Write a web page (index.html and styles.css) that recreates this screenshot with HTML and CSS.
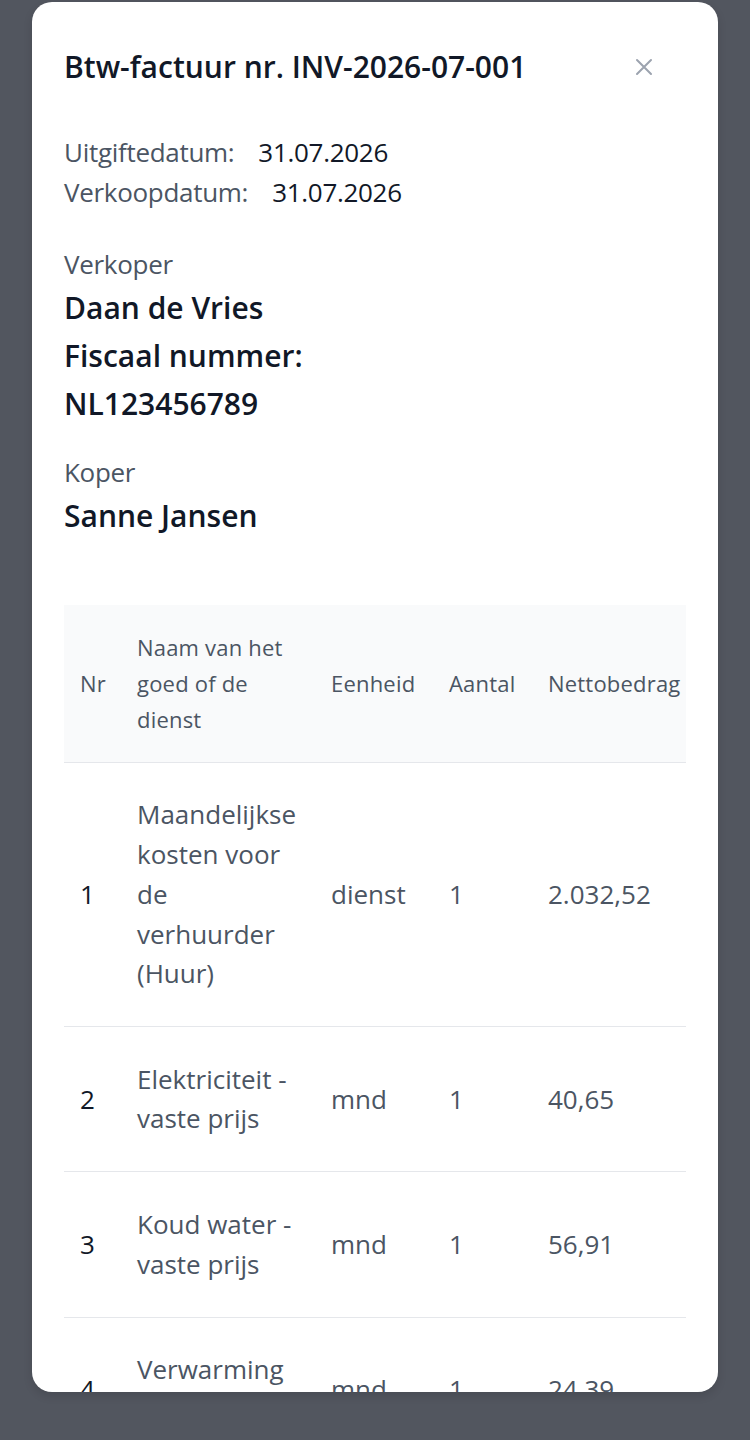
FILE: index.html
```html
<!DOCTYPE HTML>
<html>
	<head>
		<meta http-equiv="Content-Type" content="text/html; charset=UTF-8" />
		<title>Btw-factuur</title>
		<link rel="stylesheet" href="styles.css">
	</head>
	<body>
		<div class="modal">
			<div class="modal_head">
				<h1 class="modal_title">Btw-factuur nr. INV-2026-07-001</h1>
				<div class="modal_close">
					<svg width="20" height="20" viewBox="0 0 20 20">
						<path d="M3 3 L17 17 M17 3 L3 17" stroke="#9ca3af" stroke-width="2" fill="none" stroke-linecap="round"/>
					</svg>
				</div>
			</div>

			<div class="dates">
				<div><span class="label">Uitgiftedatum:</span><span class="value">31.07.2026</span></div>
				<div><span class="label">Verkoopdatum:</span><span class="value">31.07.2026</span></div>
			</div>

			<div class="party">
				<div class="label">Verkoper</div>
				<div class="party_line">Daan de Vries</div>
				<div class="party_line">Fiscaal nummer:</div>
				<div class="party_line">NL123456789</div>
			</div>

			<div class="party party--buyer">
				<div class="label">Koper</div>
				<div class="party_line">Sanne Jansen</div>
			</div>

			<div class="table_wrap">
				<table class="items">
					<colgroup>
						<col class="c-nr">
						<col class="c-name">
						<col class="c-unit">
						<col class="c-qty">
						<col class="c-net">
						<col class="c-vat">
						<col class="c-vatamount">
						<col class="c-gross">
					</colgroup>
					<thead>
						<tr>
							<th>Nr</th>
							<th>Naam van het goed of de dienst</th>
							<th>Eenheid</th>
							<th>Aantal</th>
							<th>Nettobedrag</th>
							<th>Btw %</th>
							<th>Btw-bedrag</th>
							<th>Brutobedrag</th>
						</tr>
					</thead>
					<tbody>
						<tr>
							<td class="nr">1</td>
							<td>Maandelijkse kosten voor de verhuurder (Huur)</td>
							<td>dienst</td>
							<td>1</td>
							<td>2.032,52</td>
							<td>21</td>
							<td>426,83</td>
							<td>2.459,35</td>
						</tr>
						<tr>
							<td class="nr">2</td>
							<td>Elektriciteit - vaste prijs</td>
							<td>mnd</td>
							<td>1</td>
							<td>40,65</td>
							<td>21</td>
							<td>8,54</td>
							<td>49,19</td>
						</tr>
						<tr>
							<td class="nr">3</td>
							<td>Koud water - vaste prijs</td>
							<td>mnd</td>
							<td>1</td>
							<td>56,91</td>
							<td>9</td>
							<td>5,12</td>
							<td>62,03</td>
						</tr>
						<tr>
							<td class="nr">4</td>
							<td>Verwarming <span class="nowrap">- vaste</span> prijs</td>
							<td>mnd</td>
							<td>1</td>
							<td>24,39</td>
							<td>21</td>
							<td>5,12</td>
							<td>29,51</td>
						</tr>
					</tbody>
				</table>
			</div>
		</div>
	</body>
</html>
```

FILE: styles.css
```css
html, body {
	margin: 0;
	height: 100%;
}
body {
	background: #52565f;
	font-family: "Open Sans", "Noto Sans", sans-serif;
	color: #111827;
	overflow: hidden;
}
.modal {
	margin: 2px 32px 0;
	height: 1390px;
	box-sizing: border-box;
	padding: 47px 32px 0;
	background: #fff;
	border-radius: 20px;
	overflow: hidden;
	box-shadow: 0 4px 10px rgba(0,0,0,.12);
}
.modal_head {
	display: flex;
	justify-content: space-between;
	align-items: center;
}
.modal_title {
	margin: 0;
	font-size: 30px;
	line-height: 36px;
	font-weight: 600;
	color: #111827;
}
.modal_close {
	width: 20px;
	height: 20px;
	margin-right: 32px;
	cursor: pointer;
}
.modal_close svg {
	display: block;
}
.dates {
	margin-top: 47px;
	font-size: 26px;
	line-height: 40px;
	letter-spacing: -0.3px;
}
.label {
	color: #4b5563;
	font-size: 26px;
	line-height: 40px;
	letter-spacing: -0.3px;
}
.value {
	margin-left: 24px;
	color: #111827;
}
.party {
	margin-top: 32px;
}
.party--buyer {
	margin-top: 24px;
}
.party_line {
	font-size: 30px;
	line-height: 48px;
	font-weight: 600;
}
.table_wrap {
	margin-top: 65px;
	overflow: hidden;
}
.items {
	table-layout: fixed;
	width: 1050px;
	border-collapse: collapse;
	color: #4b5563;
}
.c-nr { width: 57px; }
.c-name { width: 194px; }
.c-unit { width: 118px; }
.c-qty { width: 99px; }
.c-net { width: 170px; }
.c-vat { width: 110px; }
.c-vatamount { width: 150px; }
.c-gross { width: 152px; }
.items th {
	background: #f9fafb;
	padding: 24px 16px 25px;
	font-size: 22px;
	line-height: 36px;
	font-weight: 400;
	letter-spacing: 0.2px;
	text-align: left;
	border-bottom: 1px solid #e5e7eb;
}
.items td {
	padding: 32.4px 16px;
	font-size: 26px;
	line-height: 39.7px;
	border-bottom: 1px solid #e5e7eb;
	vertical-align: middle;
}
.items td.nr {
	color: #111827;
}
.nowrap {
	white-space: nowrap;
}
```
